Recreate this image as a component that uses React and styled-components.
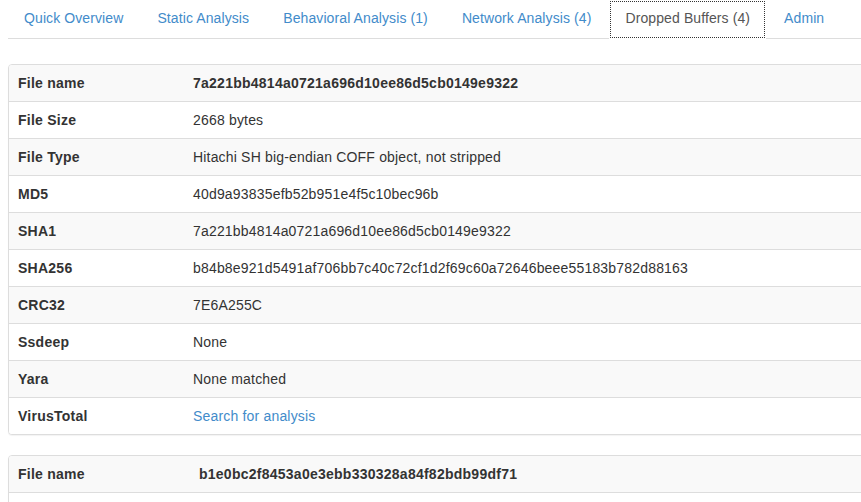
import React from "react";
import styled, { createGlobalStyle } from "styled-components";

const Global = createGlobalStyle`
  html, body { margin: 0; padding: 0; overflow: hidden; background: #fff; }
  body {
    font-family: "Liberation Sans", Arial, Helvetica, sans-serif;
    font-size: 14px;
    line-height: 20px;
    color: #333;
  }
  * { box-sizing: border-box; }
`;

const Page = styled.div`
  width: 1100px;
  padding: 0 8px;
`;

const Tabs = styled.ul`
  display: flex;
  list-style: none;
  margin: 0;
  padding: 0;
  border-bottom: 1px solid #ddd;
`;

const TabItem = styled.li`
  margin-right: 2px;
  margin-bottom: -1px;
`;

const TabLink = styled.a`
  display: block;
  padding: 8px 15px 10px;
  line-height: 20px;
  letter-spacing: 0.1px;
  border: 1px solid transparent;
  border-top: 0;
  text-decoration: none;
  color: ${(p) => (p.$active ? "#555" : "#428bca")};
  background: ${(p) => (p.$active ? "#fff" : "transparent")};
  cursor: pointer;
  ${(p) =>
    p.$active &&
    `
    border-bottom-color: #fff;
    outline: 1px dotted #333;
    outline-offset: -2px;
  `}
`;

const Panel = styled.div`
  margin-top: ${(p) => p.$top || 0}px;
  margin-bottom: 20px;
  border: 1px solid #ddd;
  border-radius: 4px;
  background: #fff;
  box-shadow: 0 1px 1px rgba(0, 0, 0, 0.05);
  overflow: hidden;
`;

const Table = styled.table`
  width: 100%;
  border-collapse: separate;
  border-spacing: 0;
`;

const Row = styled.tr`
  background: ${(p) => (p.$striped ? "#f9f9f9" : "#fff")};
  &:not(:first-child) > * {
    border-top: 1px solid #ddd;
  }
`;

const Label = styled.th`
  width: ${(p) => p.$w}px;
  padding: 8px 8px 8px 9px;
  text-align: left;
  font-weight: bold;
  letter-spacing: 0.25px;
  vertical-align: top;
  white-space: nowrap;
`;

const Value = styled.td`
  padding: 8px;
  vertical-align: top;
  font-weight: ${(p) => (p.$bold ? "bold" : "normal")};
  letter-spacing: ${(p) => (p.$bold ? "0.25px" : "0.18px")};
  white-space: nowrap;
`;

const Link = styled.a`
  color: #428bca;
  text-decoration: none;
`;

const tabs = [
  "Quick Overview",
  "Static Analysis",
  "Behavioral Analysis (1)",
  "Network Analysis (4)",
  "Dropped Buffers (4)",
  "Admin",
];

const first = [
  ["File name", "7a221bb4814a0721a696d10ee86d5cb0149e9322", true],
  ["File Size", "2668 bytes"],
  ["File Type", "Hitachi SH big-endian COFF object, not stripped"],
  ["MD5", "40d9a93835efb52b951e4f5c10bec96b"],
  ["SHA1", "7a221bb4814a0721a696d10ee86d5cb0149e9322"],
  ["SHA256", "b84b8e921d5491af706bb7c40c72cf1d2f69c60a72646beee55183b782d88163"],
  ["CRC32", "7E6A255C"],
  ["Ssdeep", "None"],
  ["Yara", "None matched"],
  ["VirusTotal", "Search for analysis", false, true],
];

const second = [
  ["File name", "b1e0bc2f8453a0e3ebb330328a84f82bdb99df71", true],
  ["File Size", "1424 bytes"],
];

function InfoTable({ rows, labelWidth, top }) {
  return (
    <Panel $top={top}>
      <Table>
        <tbody>
          {rows.map(([k, v, bold, link], i) => (
            <Row key={k} $striped={i % 2 === 0}>
              <Label $w={labelWidth}>{k}</Label>
              <Value $bold={bold}>{link ? <Link>{v}</Link> : v}</Value>
            </Row>
          ))}
        </tbody>
      </Table>
    </Panel>
  );
}

export default function App() {
  return (
    <>
      <Global />
      <Page>
        <Tabs>
          {tabs.map((t) => (
            <TabItem key={t}>
              <TabLink $active={t === "Dropped Buffers (4)"}>{t}</TabLink>
            </TabItem>
          ))}
        </Tabs>
        <InfoTable rows={first} labelWidth={176} top={25} />
        <InfoTable rows={second} labelWidth={182} />
      </Page>
    </>
  );
}
